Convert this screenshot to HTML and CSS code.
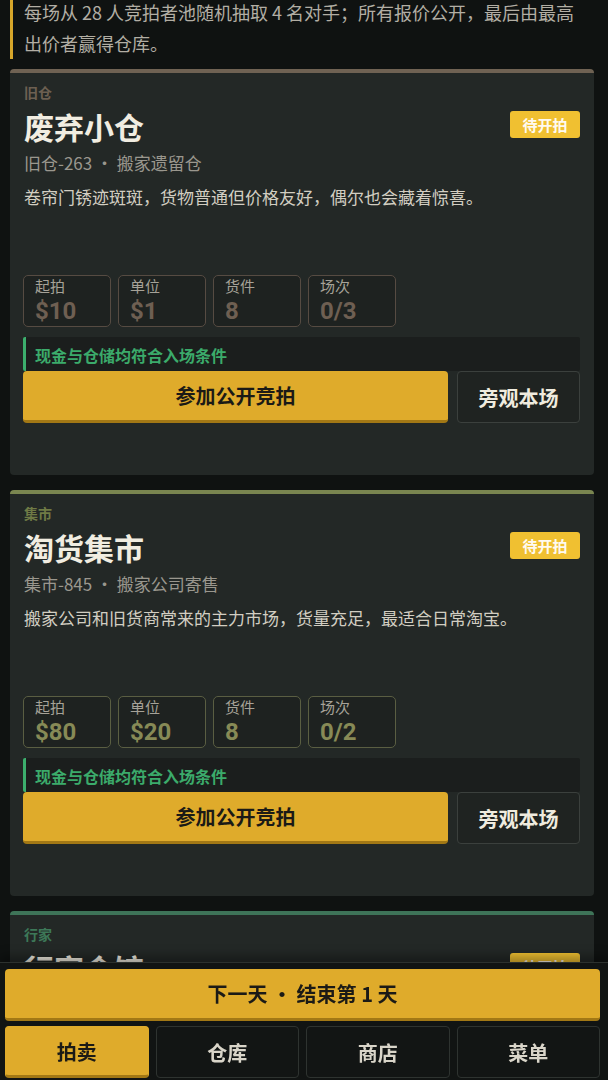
FILE: index.html
```html
<!DOCTYPE html>
<html lang="zh-CN">
<head>
<meta charset="utf-8">
<title>拍卖</title>
<link rel="stylesheet" href="styles.css">
</head>
<body>
<main class="page">
  <p class="intro">每场从 28 人竞拍者池随机抽取 4 名对手；所有报价公开，最后由最高出价者赢得仓库。</p>

  <section class="card card-old">
    <div class="tier">旧仓</div>
    <div class="head">
      <h2 class="title">废弃小仓</h2>
      <span class="badge">待开拍</span>
    </div>
    <div class="sub">旧仓-263 · 搬家遗留仓</div>
    <p class="desc">卷帘门锈迹斑斑，货物普通但价格友好，偶尔也会藏着惊喜。</p>
    <div class="stats">
      <div class="stat"><span class="stat-label">起拍</span><span class="stat-value">$10</span></div>
      <div class="stat"><span class="stat-label">单位</span><span class="stat-value">$1</span></div>
      <div class="stat"><span class="stat-label">货件</span><span class="stat-value">8</span></div>
      <div class="stat"><span class="stat-label">场次</span><span class="stat-value">0/3</span></div>
    </div>
    <div class="cond">现金与仓储均符合入场条件</div>
    <div class="actions">
      <button class="btn-join">参加公开竞拍</button>
      <button class="btn-watch">旁观本场</button>
    </div>
  </section>

  <section class="card card-market">
    <div class="tier">集市</div>
    <div class="head">
      <h2 class="title">淘货集市</h2>
      <span class="badge">待开拍</span>
    </div>
    <div class="sub">集市-845 · 搬家公司寄售</div>
    <p class="desc">搬家公司和旧货商常来的主力市场，货量充足，最适合日常淘宝。</p>
    <div class="stats">
      <div class="stat"><span class="stat-label">起拍</span><span class="stat-value">$80</span></div>
      <div class="stat"><span class="stat-label">单位</span><span class="stat-value">$20</span></div>
      <div class="stat"><span class="stat-label">货件</span><span class="stat-value">8</span></div>
      <div class="stat"><span class="stat-label">场次</span><span class="stat-value">0/2</span></div>
    </div>
    <div class="cond">现金与仓储均符合入场条件</div>
    <div class="actions">
      <button class="btn-join">参加公开竞拍</button>
      <button class="btn-watch">旁观本场</button>
    </div>
  </section>

  <section class="card card-pro">
    <div class="tier">行家</div>
    <div class="head">
      <h2 class="title">行家会馆</h2>
      <span class="badge">待开拍</span>
    </div>
  </section>
</main>

<nav class="bottom">
  <button class="next-day">下一天 · 结束第 1 天</button>
  <div class="tabs">
    <button class="tab active">拍卖</button>
    <button class="tab">仓库</button>
    <button class="tab">商店</button>
    <button class="tab">菜单</button>
  </div>
</nav>
</body>
</html>
```

FILE: styles.css
```css
* { box-sizing: border-box; }

html, body {
  margin: 0;
  padding: 0;
  background: #0f1211;
  font-family: "Noto Sans CJK SC", "Noto Sans", sans-serif;
  color: #d0ccc0;
  overflow: hidden;
}

.page {
  padding: 0 14px 0 10px;
  height: 1080px;
  overflow: hidden;
}

.intro {
  margin: -3px 0 10px;
  padding: 0 10px 0 11px;
  border-left: 3px solid #d6a62a;
  font-size: 18px;
  line-height: 31px;
  color: #b2aea4;
}

.card {
  background: #232826;
  border-top: 4px solid #6f6253;
  border-radius: 4px;
  padding: 9px 14px 52px 13px;
  margin-bottom: 15px;
}
.card-market { border-top-color: #7a8650; }
.card-pro { border-top-color: #3e7458; min-height: 200px; }

.tier {
  font-size: 14px;
  font-weight: 700;
  line-height: 20px;
  color: #6d6052;
  padding-left: 1px;
}
.card-market .tier { color: #6f7a45; }
.card-pro .tier { color: #3d7858; }

.head {
  display: flex;
  align-items: center;
  justify-content: space-between;
  margin-top: 4px;
}

.title {
  margin: 0;
  font-size: 30px;
  line-height: 40px;
  font-weight: 700;
  color: #f1ede1;
  padding-left: 1px;
}

.badge {
  display: inline-flex;
  align-items: center;
  justify-content: center;
  width: 70px;
  height: 27px;
  margin-top: -4px;
  background: #f0c031;
  border-radius: 3px;
  color: #fffaf0;
  font-size: 15px;
  font-weight: 700;
}

.sub {
  margin-top: 2px;
  font-size: 17px;
  line-height: 30px;
  color: #9a978e;
  padding-left: 1px;
}

.desc {
  margin: 4px 0 0;
  padding-left: 1px;
  font-size: 17px;
  line-height: 30px;
  color: #d2cec2;
  min-height: 93px;
}

.stats {
  display: flex;
  gap: 7px;
}
.stat {
  width: 88px;
  height: 52px;
  border: 1px solid #564b42;
  border-radius: 5px;
  background: #1e2220;
  padding: 0 10px 0 11px;
  display: flex;
  flex-direction: column;
}
.card-market .stat { border-color: #5a5e42; }

.stat-label {
  font-size: 15px;
  line-height: 20px;
  color: #a6a298;
}
.stat-value {
  font-family: Roboto, "Noto Sans", sans-serif;
  font-size: 24px;
  line-height: 28px;
  font-weight: 700;
  color: #6e5f52;
  margin-top: 1px;
}
.card-market .stat-value { color: #878a56; }

.cond {
  margin-top: 10px;
  height: 34px;
  background: #1b1e1d;
  border-left: 3px solid #3caf6d;
  border-radius: 2px;
  padding: 3px 0 0 9px;
  font-size: 16px;
  line-height: 30px;
  font-weight: 700;
  color: #3bab6b;
}

.actions {
  display: flex;
  gap: 9px;
  margin-top: 0;
}

button {
  font-family: inherit;
  cursor: pointer;
}

.btn-join {
  flex: 0 0 425px;
  height: 52px;
  background: #dfab2b;
  border: 0;
  border-bottom: 3px solid #a27815;
  border-radius: 4px;
  font-size: 20px;
  font-weight: 700;
  color: #1b1a16;
}

.btn-watch {
  flex: 1;
  height: 52px;
  background: #1f2321;
  border: 1px solid #3b403d;
  border-radius: 4px;
  font-size: 20px;
  font-weight: 700;
  color: #efebdf;
}

.bottom {
  position: fixed;
  left: 0;
  right: 0;
  bottom: 0;
  height: 118px;
  background: #111413;
  border-top: 1px solid #2c312e;
  padding: 6px 8px 0 5px;
  box-shadow: 0 -6px 10px rgba(0, 0, 0, 0.35);
}

.next-day {
  display: block;
  width: 100%;
  height: 52px;
  background: #dfab2b;
  border: 0;
  border-bottom: 3px solid #a27815;
  border-radius: 4px;
  font-size: 20px;
  font-weight: 700;
  color: #1b1a16;
}

.tabs {
  display: grid;
  grid-template-columns: repeat(4, 1fr);
  gap: 7px;
  margin-top: 5px;
}

.tab {
  height: 52px;
  background: #121514;
  border: 1px solid #2e3330;
  border-radius: 4px;
  font-size: 20px;
  font-weight: 700;
  color: #d9d5c9;
}
.tab.active {
  background: #dfab2b;
  border-color: #dfab2b;
  border-bottom: 3px solid #a27815;
  color: #1b1a16;
}
```
